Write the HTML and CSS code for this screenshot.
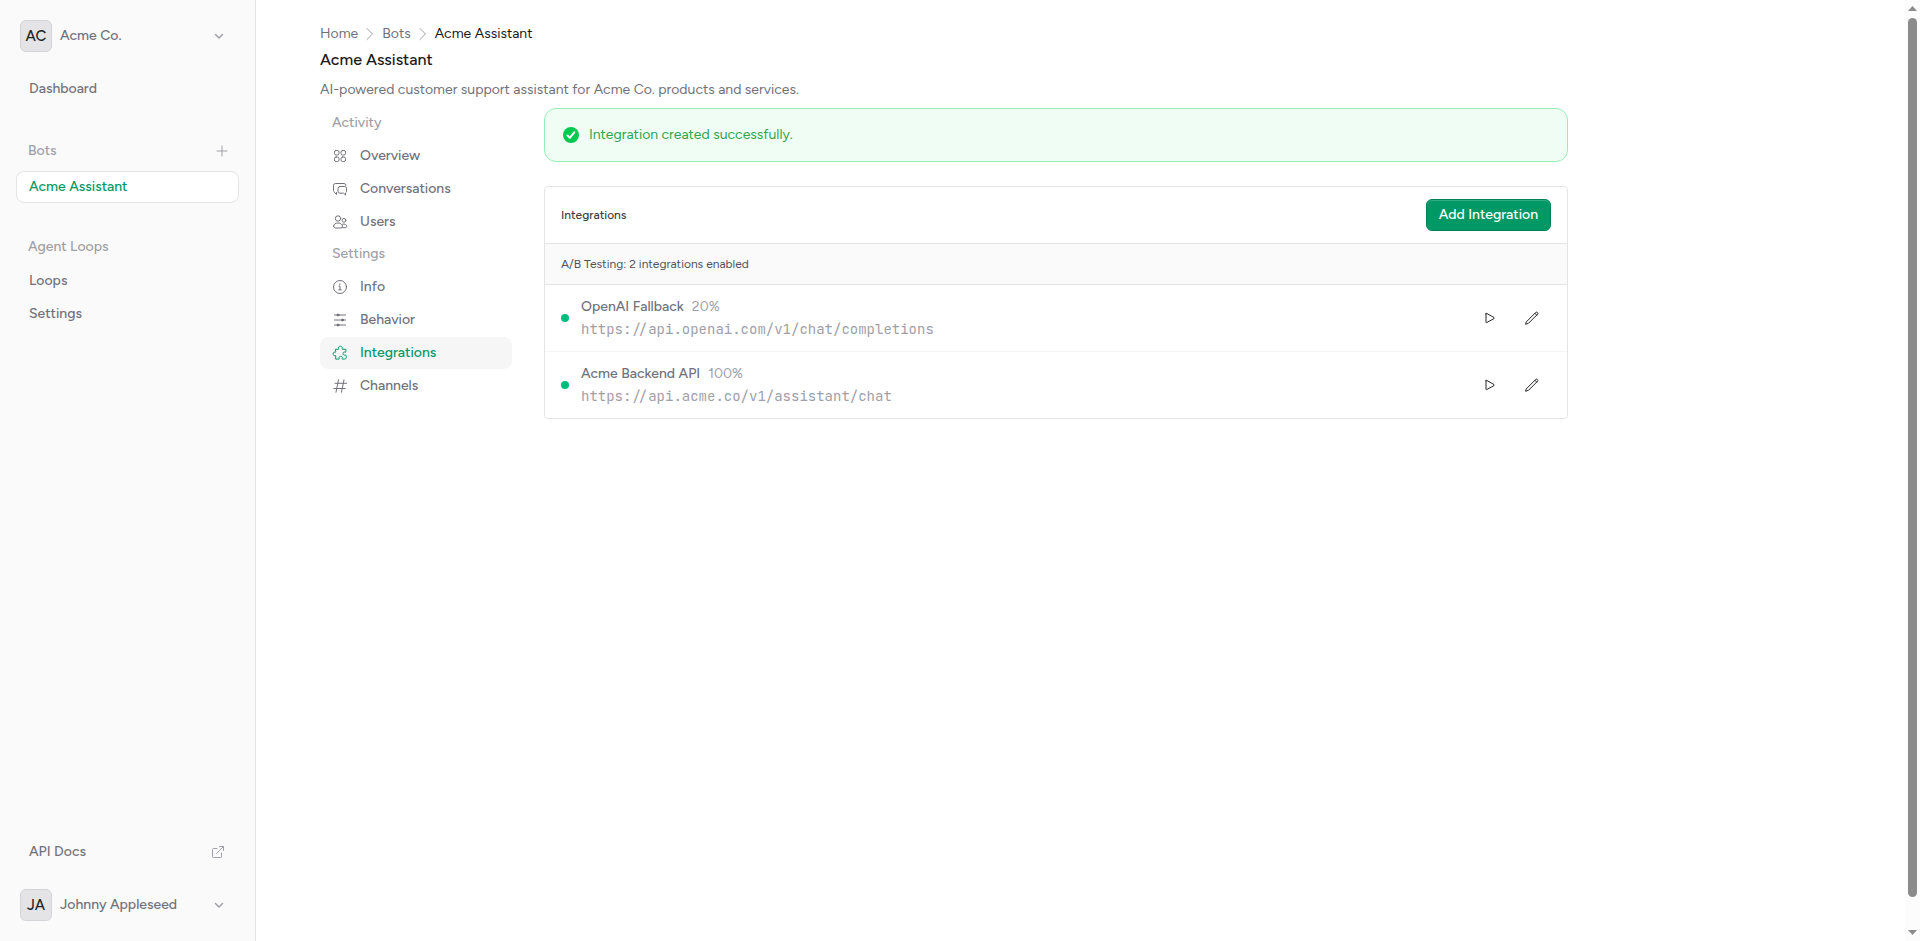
FILE: index.html
```html
<!DOCTYPE html>
<html lang="en">
<head>
    <meta charset="utf-8">
    <title>Acme Assistant - Integrations</title>
    <link rel="stylesheet" href="styles.css">
</head>
<body>
    <aside class="sidebar">
        <button type="button" class="account">
            <span class="avatar">AC</span>
            <span class="account-name">Acme Co.</span>
            <svg class="chevron" width="16" height="16" viewBox="0 0 16 16"><path d="M4.5 6.5 8 10l3.5-3.5"/></svg>
        </button>

        <nav class="sidebar-nav">
            <a href="#" class="side-link">Dashboard</a>

            <div class="side-heading with-button">
                <span>Bots</span>
                <button type="button" class="add-bot" aria-label="Add bot">
                    <svg width="16" height="16" viewBox="0 0 16 16"><path d="M8 3v10M3 8h10"/></svg>
                </button>
            </div>
            <a href="#" class="side-link current">Acme Assistant</a>

            <div class="side-heading">
                <span>Agent Loops</span>
            </div>
            <a href="#" class="side-link">Loops</a>
            <a href="#" class="side-link">Settings</a>
        </nav>

        <a href="#" class="side-link docs-link">
            API Docs
            <svg width="16" height="16" viewBox="0 0 16 16"><path d="M7 4.5H3.5a1 1 0 0 0-1 1v7a1 1 0 0 0 1 1h7a1 1 0 0 0 1-1V9M6.5 9.5l7-7M9.5 2.5h4v4"/></svg>
        </a>

        <button type="button" class="account">
            <span class="avatar">JA</span>
            <span class="account-name">Johnny Appleseed</span>
            <svg class="chevron" width="16" height="16" viewBox="0 0 16 16"><path d="M4.5 6.5 8 10l3.5-3.5"/></svg>
        </button>
    </aside>

    <main class="main">
        <nav class="breadcrumbs" aria-label="Breadcrumb">
            <a href="#">Home</a>
            <svg width="8" height="14" viewBox="0 0 8 14"><path d="M1 1.5 6.5 7 1 12.5"/></svg>
            <a href="#">Bots</a>
            <svg width="8" height="14" viewBox="0 0 8 14"><path d="M1 1.5 6.5 7 1 12.5"/></svg>
            <span class="crumb-current">Acme Assistant</span>
        </nav>
        <h1>Acme Assistant</h1>
        <p class="description">AI-powered customer support assistant for Acme Co. products and services.</p>

        <div class="columns">
            <nav class="bot-nav">
                <h2>Activity</h2>
                <a href="#">
                    <svg width="16" height="16" viewBox="0 0 16 16"><rect x="2.5" y="2.5" width="4.5" height="4.5" rx="1.600"/><rect x="9" y="2.5" width="4.5" height="4.5" rx="1.600"/><rect x="2.5" y="9" width="4.5" height="4.5" rx="1.600"/><rect x="9" y="9" width="4.5" height="4.5" rx="1.600"/></svg>
                    Overview
                </a>
                <a href="#">
                    <svg width="16" height="16" viewBox="0 0 16 16"><path d="M4.5 11.5v2l-2-2.2A2 2 0 0 1 1.5 9.5v-5a2 2 0 0 1 2-2H12a2 2 0 0 1 2 2"/><path d="M8 5.5h4.5a2 2 0 0 1 2 2v2.8a2 2 0 0 1-1 1.700v2l-2-1.800H8a2 2 0 0 1-2-2V7.5a2 2 0 0 1 2-2Z"/></svg>
                    Conversations
                </a>
                <a href="#">
                    <svg width="16" height="16" viewBox="0 0 16 16"><circle cx="6" cy="4.5" r="2.7"/><circle cx="12" cy="6.3" r="1.9"/><path d="M1.6 12.2c0-2 2-3.2 4.4-3.2s4.4 1.200 4.4 3.2c0 1.200-1 1.800-2.200 1.800H3.800c-1.200 0-2.200-.6-2.200-1.800ZM10.500 10.200c2-.7 4.300.3 4.300 2.100 0 .9-.7 1.400-1.700 1.400h-3"/></svg>
                    Users
                </a>
                <h2>Settings</h2>
                <a href="#">
                    <svg width="16" height="16" viewBox="0 0 16 16"><circle cx="8" cy="8" r="6.5"/><path d="M7 7.200h1v3.600M6.800 10.800h2.400M7.900 4.900v.8"/></svg>
                    Info
                </a>
                <a href="#">
                    <svg width="16" height="16" viewBox="0 0 16 16"><path d="M2.5 3h11M2.5 8h11M2.5 13h11"/><circle class="knob" cx="6" cy="3" r="1"/><circle class="knob" cx="10.5" cy="8" r="1"/><circle class="knob" cx="6" cy="13" r="1"/></svg>
                    Behavior
                </a>
                <a href="#" class="current">
                    <svg width="16" height="16" viewBox="0 0 16 16"><path d="M3.700 4.300h2.600c.4 0 .6-.3.400-.7-.7-1.100 0-2.300 1.700-2.300s2.400 1.200 1.700 2.300c-.2.400 0 .7.400.7h3.300v2.500c0 .4-.3.600-.7.400-1.100-.6-2.100.1-2.100 1.400s1 2 2.100 1.400c.4-.2.700 0 .9.400.3.700.4 1.500.2 2.300-.2.900-.8 1.400-1.700 1.400h-2c-.4 0-.6-.3-.4-.7.600-1.100-.1-2.100-1.400-2.100s-2 1-1.400 2.100c.2.400 0 .7-.4.700H3.700v-3.200c0-.4-.3-.6-.6-.4-1 .6-2-.2-2-1.600s1-2.200 2-1.600c.3.200.6 0 .6-.4Z"/></svg>
                    Integrations
                </a>
                <a href="#">
                    <svg width="16" height="16" viewBox="0 0 16 16"><path d="M6.500 1.800 4 14.200M12 1.800 9.500 14.200M3 5.300h11.500M1.800 10.500h11.500"/></svg>
                    Channels
                </a>
            </nav>

            <div class="content">
                <div class="alert" role="status">
                    <svg width="20" height="20" viewBox="0 0 20 20"><circle cx="10" cy="10" r="8"/><path d="m6.500 10.500 2.300 2.300 4.500-5.500"/></svg>
                    Integration created successfully.
                </div>

                <section class="card">
                    <header class="card-header">
                        <h2>Integrations</h2>
                        <button type="button" class="add-button">Add Integration</button>
                    </header>
                    <div class="card-note">A/B Testing: 2 integrations enabled</div>
                    <ul class="integrations">
                        <li>
                            <span class="status"></span>
                            <div class="details">
                                <div class="name">OpenAI Fallback <span class="weight">20%</span></div>
                                <div class="url">https://api.openai.com/v1/chat/completions</div>
                            </div>
                            <button type="button" class="icon-button" aria-label="Test">
                                <svg width="16" height="16" viewBox="0 0 16 16"><path d="M4 3.800v8.400c0 .5.300.6.700.4l7.300-4c.5-.3.500-.8 0-1.100l-7.300-4.100c-.4-.2-.7-.1-.7.400Z"/></svg>
                            </button>
                            <button type="button" class="icon-button" aria-label="Edit">
                                <svg width="16" height="16" viewBox="0 0 16 16"><path d="m2.600 11.600 9.300-9.300c.8-.8 2.600.8 1.800 1.800l-9.300 9.300-2.500.7ZM10.900 3.300l1.800 1.800"/></svg>
                            </button>
                        </li>
                        <li>
                            <span class="status"></span>
                            <div class="details">
                                <div class="name">Acme Backend API <span class="weight">100%</span></div>
                                <div class="url">https://api.acme.co/v1/assistant/chat</div>
                            </div>
                            <button type="button" class="icon-button" aria-label="Test">
                                <svg width="16" height="16" viewBox="0 0 16 16"><path d="M4 3.800v8.400c0 .5.300.6.700.4l7.300-4c.5-.3.500-.8 0-1.100l-7.300-4.100c-.4-.2-.7-.1-.7.400Z"/></svg>
                            </button>
                            <button type="button" class="icon-button" aria-label="Edit">
                                <svg width="16" height="16" viewBox="0 0 16 16"><path d="m2.600 11.600 9.300-9.300c.8-.8 2.600.8 1.800 1.800l-9.300 9.300-2.500.7ZM10.900 3.300l1.800 1.800"/></svg>
                            </button>
                        </li>
                    </ul>
                </section>
            </div>
        </div>
    </main>

    <div class="scrollbar" aria-hidden="true">
        <svg width="9" height="5" viewBox="0 0 9 5"><path d="M4.500 0 9 5H0Z"/></svg>
        <span class="thumb"></span>
        <svg width="9" height="5" viewBox="0 0 9 5"><path d="M0 0h9L4.500 5Z"/></svg>
    </div>
</body>
</html>
```
FILE: styles.css
```css
* {
    box-sizing: border-box;
}

body {
    display: flex;
    min-height: 100vh;
    margin: 0;
    font-family: Figtree, Lato, sans-serif;
    font-size: 14px;
    line-height: 20px;
    color: #71717b;
    background-color: #fff;
}

h1,
h2,
p,
ul {
    margin: 0;
    padding: 0;
}

a {
    color: inherit;
    text-decoration: none;
}

button {
    font: inherit;
    color: inherit;
    background: none;
    border: none;
    padding: 0;
    cursor: pointer;
}

svg {
    flex: none;
    fill: none;
    stroke: currentColor;
    stroke-linecap: round;
    stroke-linejoin: round;
}

/* Sidebar */
.sidebar {
    display: flex;
    flex-direction: column;
    flex: none;
    width: 256px;
    padding: 20px 16px;
    background-color: #fafafa;
    border-right: 1px solid #e4e4e7;
    font-weight: 500;
}

.account {
    display: flex;
    align-items: center;
    gap: 8px;
    padding: 0 12px 0 4px;
    text-align: left;
}

.avatar {
    display: flex;
    align-items: center;
    justify-content: center;
    width: 32px;
    height: 32px;
    border: 1px solid #d4d4d8;
    border-radius: 6px;
    background-color: #e4e4e7;
    color: #27272a;
    font-size: 15px;
}

.account-name {
    flex: 1;
}

.chevron {
    color: #9f9fa9;
    stroke-width: 1.5;
}

.sidebar-nav {
    flex: 1;
    display: flex;
    flex-direction: column;
    gap: 1px;
    margin-top: 21px;
}

.side-link {
    display: flex;
    align-items: center;
    justify-content: space-between;
    height: 32px;
    padding: 0 12px;
    border: 1px solid transparent;
    border-radius: 8px;
}

.side-link.current {
    background-color: #fff;
    border-color: #e4e4e7;
    color: #009966;
}

.side-heading {
    display: flex;
    align-items: center;
    justify-content: space-between;
    height: 32px;
    margin: 27px 0 1px;
    padding: 0 9px 0 12px;
    color: #9f9fa9;
}

.side-heading.with-button {
    margin: 29px 0 3px;
}

.add-bot {
    display: flex;
}

.docs-link {
    margin-bottom: 21px;
}

.docs-link svg {
    color: #9f9fa9;
}

/* Page */
.main {
    flex: 1;
    max-width: 1376px;
    padding: 24px 64px;
}

.breadcrumbs {
    display: flex;
    align-items: center;
    gap: 8px;
}

.breadcrumbs svg {
    color: #9f9fa9;
}

.crumb-current {
    color: #18181b;
}

h1 {
    margin-top: 4px;
    font-size: 16px;
    font-weight: 500;
    line-height: 24px;
    color: #18181b;
}

.description {
    margin-top: 8px;
}

.columns {
    display: flex;
    gap: 32px;
    margin-top: 8px;
}

.bot-nav {
    display: flex;
    flex-direction: column;
    gap: 1px;
    flex: none;
    width: 192px;
    font-weight: 500;
}

.bot-nav h2 {
    padding: 5px 12px 6px;
    font-size: 14px;
    font-weight: 500;
    line-height: 20px;
    color: #9f9fa9;
}

.bot-nav a {
    display: flex;
    align-items: center;
    gap: 12px;
    height: 32px;
    padding: 0 12px;
    border-radius: 8px;
}

.bot-nav .current {
    background-color: #f6f6f6;
    color: #009966;
}

.knob {
    fill: currentColor;
}

.content {
    flex: 1;
}

.alert {
    display: flex;
    align-items: center;
    gap: 8px;
    height: 54px;
    padding: 0 16px;
    border: 1px solid #96edb5;
    border-radius: 12px;
    background-color: #f0fdf4;
    color: #2ea44f;
}

.alert svg {
    stroke: #fff;
    stroke-width: 2;
}

.alert circle {
    fill: #00c950;
    stroke: none;
}

.card {
    margin-top: 24px;
    border: 1px solid #e4e4e7;
    border-radius: 4px;
    overflow: hidden;
}

.card-header {
    display: flex;
    align-items: center;
    justify-content: space-between;
    padding: 12px 16px;
    border-bottom: 1px solid #e4e4e7;
}

.card-header h2 {
    font-size: 12px;
    font-weight: 500;
    color: #3f3f46;
}

.add-button {
    height: 32px;
    padding: 0 12px;
    border: 1px solid #008057;
    border-radius: 6px;
    background-color: #009966;
    box-shadow: inset 0 1px #33ad85;
    color: #fff;
    font-weight: 500;
}

.card-note {
    padding: 10px 16px;
    border-bottom: 1px solid #e4e4e7;
    background-color: #fafafa;
    font-size: 12px;
    color: #52525c;
}

.integrations {
    list-style: none;
}

.integrations li {
    display: flex;
    align-items: center;
    padding: 11px 16px;
}

.integrations li + li {
    border-top: 1px solid #f4f4f5;
}

.status {
    width: 8px;
    height: 8px;
    margin-right: 12px;
    border-radius: 50%;
    background-color: #00bc7d;
}

.details {
    flex: 1;
}

.name,
.url {
    line-height: 22px;
}

.name {
    display: flex;
    gap: 8px;
    font-weight: 500;
}

.weight {
    color: #9f9fa9;
    font-weight: 400;
}

.url {
    font-family: "JetBrains Mono", "DejaVu Sans Mono", monospace;
    color: #9f9fa9;
}

.icon-button {
    display: flex;
    align-items: center;
    justify-content: center;
    width: 38px;
    height: 32px;
    color: #27272a;
}

.icon-button + .icon-button {
    margin-left: 4px;
}

/* Scroll track along the window's right edge */
.scrollbar {
    display: flex;
    flex-direction: column;
    align-items: center;
    position: fixed;
    top: 0;
    right: 0;
    bottom: 0;
    width: 15px;
    padding: 6px 0;
    background-color: #fcfcfc;
}

.scrollbar path {
    fill: #8b8b8b;
    stroke: none;
}

.thumb {
    flex: 1;
    width: 9px;
    margin: 7px 0 33px;
    border-radius: 5px;
    background-color: #8b8b8b;
}
```
